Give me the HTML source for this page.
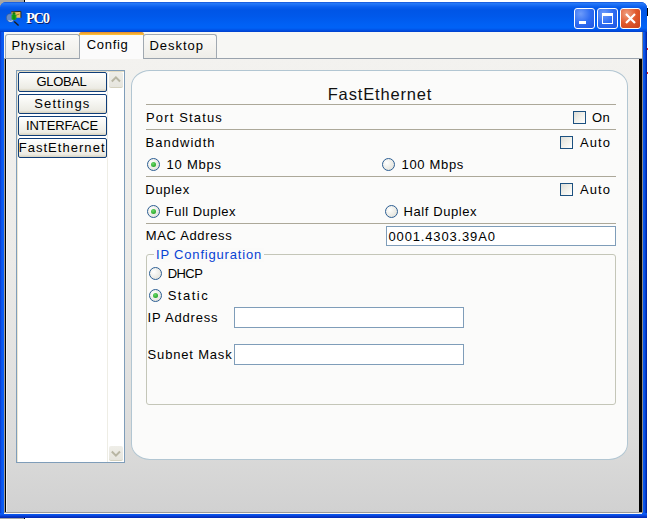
<!DOCTYPE html>
<html><head><meta charset="utf-8">
<style>
*{margin:0;padding:0;box-sizing:border-box}
html,body{width:648px;height:519px;overflow:hidden;background:#fff;position:relative;font-family:"Liberation Sans",sans-serif}
.a{position:absolute}
.t{position:absolute;font-size:14px;line-height:14px;white-space:nowrap;color:#000}
#desk{left:0;top:0;width:24px;height:6px;background:#a6a6a6}
#deskline{left:24px;top:0;width:1px;height:3px;background:#000}
#frame{left:0;top:2px;width:647px;height:516px;border-radius:6px 6px 0 0;background:linear-gradient(90deg,#0a2fc0 0,#0a52e8 1px,#0a5cf5 3px,#0a5cf5 643px,#0a4ee0 645px,#0030b8 646px,#00209a 647px)}
#fbot{left:0;top:513px;width:647px;height:5px;background:linear-gradient(180deg,#0a5cf5 0,#0a54ec 2px,#0a3cd0 3px,#0028b0 5px)}
#bstrip{left:0;top:518px;width:24px;height:1px;background:#a8a8a8}
#bstripk{left:24px;top:518px;width:1px;height:1px;background:#000}
#title{left:0;top:2px;width:647px;height:30px;border-radius:6px 6px 0 0;background:linear-gradient(180deg,#0a44cc 0,#2a7cf8 1px,#1a6ef5 3px,#0a5eee 5px,#0055e6 8px,#0058ea 14px,#0060f4 22px,#0062f6 26px,#0052e6 28px,#0040cc 30px)}
#content{left:4px;top:32px;width:638px;height:481px;background:#f7f7f4}
#bottomline{left:4px;top:512px;width:638px;height:1px;background:#9a9a9a}
#bottomwhite{left:4px;top:513px;width:638px;height:1px;background:#f8f8f8}
#pane{left:4px;top:58px;width:638px;height:454px;background:linear-gradient(180deg,#f3f2ef 0,#ecebe8 200px,#dcdcdb 380px,#d1d1d1 454px)}
#paneTop{left:4px;top:58px;width:638px;height:1px;background:#9aa3ad}
#lblack{left:5px;top:59px;width:1px;height:453px;background:#000}
#lgray{left:4px;top:59px;width:1px;height:453px;background:#9a9a9a}
#rblack{left:639px;top:59px;width:3px;height:453px;background:#000}
#rgray{left:642px;top:32px;width:1px;height:481px;background:#8a8a8a}
.tab{position:absolute;top:34px;height:24px;border:1px solid #a1a9b1;border-bottom:none;border-radius:3px 3px 0 0;background:linear-gradient(180deg,#fafaf8 0,#f3f2ee 60%,#eeede8 100%)}
#tabsel{left:79px;top:32px;width:65px;height:27px;background:#fbfbfb;border:1px solid #a1a9b1;border-bottom:none;border-radius:3px 3px 0 0}
#tabselTop{left:79px;top:32px;width:65px;height:3px;background:linear-gradient(180deg,#e68b2c,#ffc73c);border-radius:3px 3px 0 0}
.btn{position:absolute;width:21px;height:21px;border:1px solid #fff;border-radius:3px}
#list{left:16px;top:70px;width:109px;height:393px;border:1px solid #7f9db9;background:#fff}
.lb{position:absolute;left:18px;width:89px;height:20px;border:1px solid #0f3d78;border-radius:2px;background:linear-gradient(180deg,#fff 0,#f6f6f2 40%,#ecebe4 85%,#d8d2bd 100%)}
.lbt{position:absolute;left:18px;width:90px;text-align:center;font-size:13px;line-height:13px;white-space:nowrap}
.sb{position:absolute;left:109px;width:14px;height:16px;border-radius:2px;background:linear-gradient(180deg,#efeee8,#e6e5de);border-bottom:1px solid #d4d1bf}
#panel{left:131px;top:70px;width:497px;height:390px;border:1px solid #b2c6d2;border-radius:19px/16px;background:#fbfbfa}
.sep{position:absolute;left:146px;width:470px;height:1px;background:#aca899}
.rad{position:absolute;width:13px;height:13px;border-radius:50%;border:1px solid #2c5e93;background:radial-gradient(circle at 35% 35%,#fff 0,#f4f4f0 30%,#dcdcd4 100%)}
.rad.on::after{content:"";position:absolute;left:3px;top:3px;width:5px;height:5px;border-radius:50%;background:radial-gradient(circle at 40% 35%,#6ad86a,#129512)}
.chk{position:absolute;width:13px;height:13px;border:1px solid #1c5180;background:linear-gradient(135deg,#dcdcd7 0,#f0f0ea 50%,#fff 100%)}
.inp{position:absolute;border:1px solid #7f9db9;background:#fff}
#grp{left:146px;top:254px;width:470px;height:151px;border:1px solid #c4c6b8;border-radius:3px}
</style></head><body>
<div class="a" id="desk"></div><div class="a" id="deskline"></div><div class="a" style="left:647px;top:8px;width:1px;height:8px;background:#000"></div><div class="a" style="left:647px;top:48px;width:1px;height:2px;background:#e02020"></div><div class="a" style="left:647px;top:72px;width:1px;height:2px;background:#e02020"></div>
<div class="a" id="frame"></div>
<div class="a" id="title"></div>
<div class="a" id="fbot"></div><div class="a" id="bstrip"></div><div class="a" id="bstripk"></div>
<!-- icon -->
<svg class="a" style="left:4px;top:8px" width="20" height="20" viewBox="0 0 20 20">
  <polygon points="7.2,3.8 16.9,3.3 16.9,9.8 8,9.8" fill="#e6c060"/>
  <path d="M7.2 3.9 L16.9 3.4 L16.9 9.8" stroke="#2a1e08" stroke-width="0.9" fill="none"/>
  <path d="M11 7.5 L15.5 6" stroke="#8a6a20" stroke-width="0.8"/>
  <circle cx="6.5" cy="9.8" r="4.1" fill="#6f90c4" stroke="#4a5870" stroke-width="0.5" opacity="0.9"/>
  <path d="M4.5 12.8 Q6.5 14 8.8 12.8" stroke="#e8eef8" stroke-width="0.9" fill="none"/>
  <circle cx="10" cy="5.6" r="1.4" fill="#0c7a0c"/>
  <rect x="7.6" y="6.4" width="4.8" height="5.4" rx="1.2" fill="#14a814"/>
  <path d="M10 6.8 L10 11.6" stroke="#0a6a0a" stroke-width="0.8"/>
  <line x1="10.2" y1="13.6" x2="14.6" y2="17.6" stroke="#1a1a1a" stroke-width="1.4"/>
</svg>
<!-- title buttons -->
<div class="btn" style="left:574px;top:8px;background:radial-gradient(circle at 30% 25%,#6d9bfa 0,#2f6df2 50%,#1f55e0 100%)"><div class="a" style="left:4px;top:12px;width:7px;height:3px;background:#fff"></div></div>
<div class="btn" style="left:597px;top:8px;background:radial-gradient(circle at 30% 25%,#6d9bfa 0,#2f6df2 50%,#1f55e0 100%)"><div class="a" style="left:4px;top:4px;width:11px;height:11px;border:1px solid #fff;border-top-width:3px"></div></div>
<div class="btn" style="left:620px;top:8px;background:radial-gradient(circle at 30% 25%,#f0a080 0,#e0582c 50%,#c8401a 100%)">
<svg class="a" style="left:0;top:0" width="19" height="19"><path d="M5 5 L14 14 M14 5 L5 14" stroke="#fff" stroke-width="2.2"/></svg></div>

<div class="a" id="content"></div>
<div class="a" id="pane"></div>
<div class="a" id="paneTop"></div>
<div class="a" id="lgray"></div><div class="a" id="lblack"></div><div class="a" style="left:6px;top:59px;width:1px;height:453px;background:rgba(255,255,255,0.6)"></div>
<div class="a" id="rblack"></div><div class="a" id="rgray"></div>
<div class="a" id="bottomline"></div><div class="a" id="bottomwhite"></div>

<!-- tabs -->
<div class="tab" style="left:5px;width:75px"></div>
<div class="tab" style="left:143px;width:74px"></div>
<div class="a" id="tabsel"></div>
<div class="a" id="tabselTop"></div>

<!-- left list -->
<div class="a" id="list"></div>
<div class="a" style="left:17px;top:71px;width:107px;height:1px;background:#e3dcc4"></div><div class="a" style="left:17px;top:71px;width:1px;height:391px;background:#ebe6d4"></div>
<div class="a" style="left:107px;top:71px;width:1px;height:391px;background:#eeede5"></div>
<div class="lb" style="top:72px"></div>
<div class="lb" style="top:94px"></div>
<div class="lb" style="top:116px"></div>
<div class="lb" style="top:138px"></div>
<div class="sb" style="top:72px"><svg class="a" style="left:1px;top:3px" width="12" height="8"><path d="M1.8 6.5 L5.9 2.4 L10 6.5" stroke="#b8b6a4" stroke-width="2" fill="none"/></svg></div>
<div class="sb" style="top:446px;height:15px"><svg class="a" style="left:1px;top:4px" width="12" height="8"><path d="M1.8 1.5 L5.9 5.6 L10 1.5" stroke="#b8b6a4" stroke-width="2" fill="none"/></svg></div>

<!-- main panel -->
<div class="a" id="panel"></div>
<div class="sep" style="top:104px"></div>
<div class="chk" style="left:573px;top:111px"></div>
<div class="sep" style="top:129px"></div>
<div class="chk" style="left:560px;top:136px"></div>
<div class="rad on" style="left:147px;top:158px"></div>
<div class="rad" style="left:382px;top:158px"></div>
<div class="sep" style="top:176px"></div>
<div class="chk" style="left:560px;top:183px"></div>
<div class="rad on" style="left:147px;top:205px"></div>
<div class="rad" style="left:385px;top:205px"></div>
<div class="sep" style="top:223px"></div>
<div class="inp" style="left:386px;top:226px;width:230px;height:20px"></div>

<div class="a" id="grp"></div>
<div class="a" style="left:154px;top:248px;width:110px;height:14px;background:#fafaf9"></div>
<div class="rad" style="left:149px;top:267px"></div>
<div class="rad on" style="left:149px;top:289px"></div>
<div class="inp" style="left:234px;top:307px;width:230px;height:21px"></div>
<div class="inp" style="left:234px;top:344px;width:230px;height:21px"></div>
<div class="t" style="left:26.00px;top:11.00px;font-family:'Liberation Serif',serif;font-size:14.5px;line-height:14.5px;font-weight:bold;color:#fff;letter-spacing:-1.300px;text-shadow:1px 1px 0 #0a1a60">PC0</div>
<div class="t" style="left:11.40px;top:39.00px;font-family:'Liberation Sans',sans-serif;font-size:13px;line-height:13px;font-weight:normal;color:#000;letter-spacing:0.729px;">Physical</div>
<div class="t" style="left:86.70px;top:38.00px;font-family:'Liberation Sans',sans-serif;font-size:13px;line-height:13px;font-weight:normal;color:#000;letter-spacing:0.700px;">Config</div>
<div class="t" style="left:149.40px;top:39.00px;font-family:'Liberation Sans',sans-serif;font-size:13px;line-height:13px;font-weight:normal;color:#000;letter-spacing:0.967px;">Desktop</div>
<div class="t" style="left:36.50px;top:75.00px;font-family:'Liberation Sans',sans-serif;font-size:13px;line-height:13px;font-weight:normal;color:#000;letter-spacing:-0.340px;">GLOBAL</div>
<div class="t" style="left:34.30px;top:97.00px;font-family:'Liberation Sans',sans-serif;font-size:13px;line-height:13px;font-weight:normal;color:#000;letter-spacing:1.143px;">Settings</div>
<div class="t" style="left:26.10px;top:119.00px;font-family:'Liberation Sans',sans-serif;font-size:13px;line-height:13px;font-weight:normal;color:#000;letter-spacing:-0.113px;">INTERFACE</div>
<div class="t" style="left:18.70px;top:141.00px;font-family:'Liberation Sans',sans-serif;font-size:13px;line-height:13px;font-weight:normal;color:#000;letter-spacing:1.036px;">FastEthernet</div>
<div class="t" style="left:327.70px;top:86.00px;font-family:'Liberation Sans',sans-serif;font-size:16.5px;line-height:16.5px;font-weight:normal;color:#111;letter-spacing:0.845px;">FastEthernet</div>
<div class="t" style="left:146.00px;top:111.00px;font-family:'Liberation Sans',sans-serif;font-size:13px;line-height:13px;font-weight:normal;color:#000;letter-spacing:1.150px;">Port Status</div>
<div class="t" style="left:592.00px;top:111.00px;font-family:'Liberation Sans',sans-serif;font-size:13px;line-height:13px;font-weight:normal;color:#000;letter-spacing:0.300px;">On</div>
<div class="t" style="left:145.50px;top:136.00px;font-family:'Liberation Sans',sans-serif;font-size:13px;line-height:13px;font-weight:normal;color:#000;letter-spacing:1.038px;">Bandwidth</div>
<div class="t" style="left:580.00px;top:136.00px;font-family:'Liberation Sans',sans-serif;font-size:13px;line-height:13px;font-weight:normal;color:#000;letter-spacing:1.100px;">Auto</div>
<div class="t" style="left:166.50px;top:158.00px;font-family:'Liberation Sans',sans-serif;font-size:13px;line-height:13px;font-weight:normal;color:#000;letter-spacing:0.783px;">10 Mbps</div>
<div class="t" style="left:401.50px;top:158.00px;font-family:'Liberation Sans',sans-serif;font-size:13px;line-height:13px;font-weight:normal;color:#000;letter-spacing:0.671px;">100 Mbps</div>
<div class="t" style="left:145.30px;top:183.00px;font-family:'Liberation Sans',sans-serif;font-size:13px;line-height:13px;font-weight:normal;color:#000;letter-spacing:0.700px;">Duplex</div>
<div class="t" style="left:580.00px;top:183.00px;font-family:'Liberation Sans',sans-serif;font-size:13px;line-height:13px;font-weight:normal;color:#000;letter-spacing:1.100px;">Auto</div>
<div class="t" style="left:165.80px;top:205.00px;font-family:'Liberation Sans',sans-serif;font-size:13px;line-height:13px;font-weight:normal;color:#000;letter-spacing:0.460px;">Full Duplex</div>
<div class="t" style="left:403.50px;top:205.00px;font-family:'Liberation Sans',sans-serif;font-size:13px;line-height:13px;font-weight:normal;color:#000;letter-spacing:0.590px;">Half Duplex</div>
<div class="t" style="left:145.80px;top:229.00px;font-family:'Liberation Sans',sans-serif;font-size:13px;line-height:13px;font-weight:normal;color:#000;letter-spacing:0.640px;">MAC Address</div>
<div class="t" style="left:388.50px;top:230.00px;font-family:'Liberation Sans',sans-serif;font-size:13px;line-height:13px;font-weight:normal;color:#000;letter-spacing:0.846px;">0001.4303.39A0</div>
<div class="t" style="left:156.00px;top:248.00px;font-family:'Liberation Sans',sans-serif;font-size:13px;line-height:13px;font-weight:normal;color:#0842d4;letter-spacing:0.813px;">IP Configuration</div>
<div class="t" style="left:167.70px;top:267.00px;font-family:'Liberation Sans',sans-serif;font-size:13px;line-height:13px;font-weight:normal;color:#000;letter-spacing:-0.567px;">DHCP</div>
<div class="t" style="left:167.70px;top:289.00px;font-family:'Liberation Sans',sans-serif;font-size:13px;line-height:13px;font-weight:normal;color:#000;letter-spacing:1.500px;">Static</div>
<div class="t" style="left:147.60px;top:311.00px;font-family:'Liberation Sans',sans-serif;font-size:13px;line-height:13px;font-weight:normal;color:#000;letter-spacing:0.822px;">IP Address</div>
<div class="t" style="left:147.60px;top:348.00px;font-family:'Liberation Sans',sans-serif;font-size:13px;line-height:13px;font-weight:normal;color:#000;letter-spacing:0.820px;">Subnet Mask</div>
</body></html>
